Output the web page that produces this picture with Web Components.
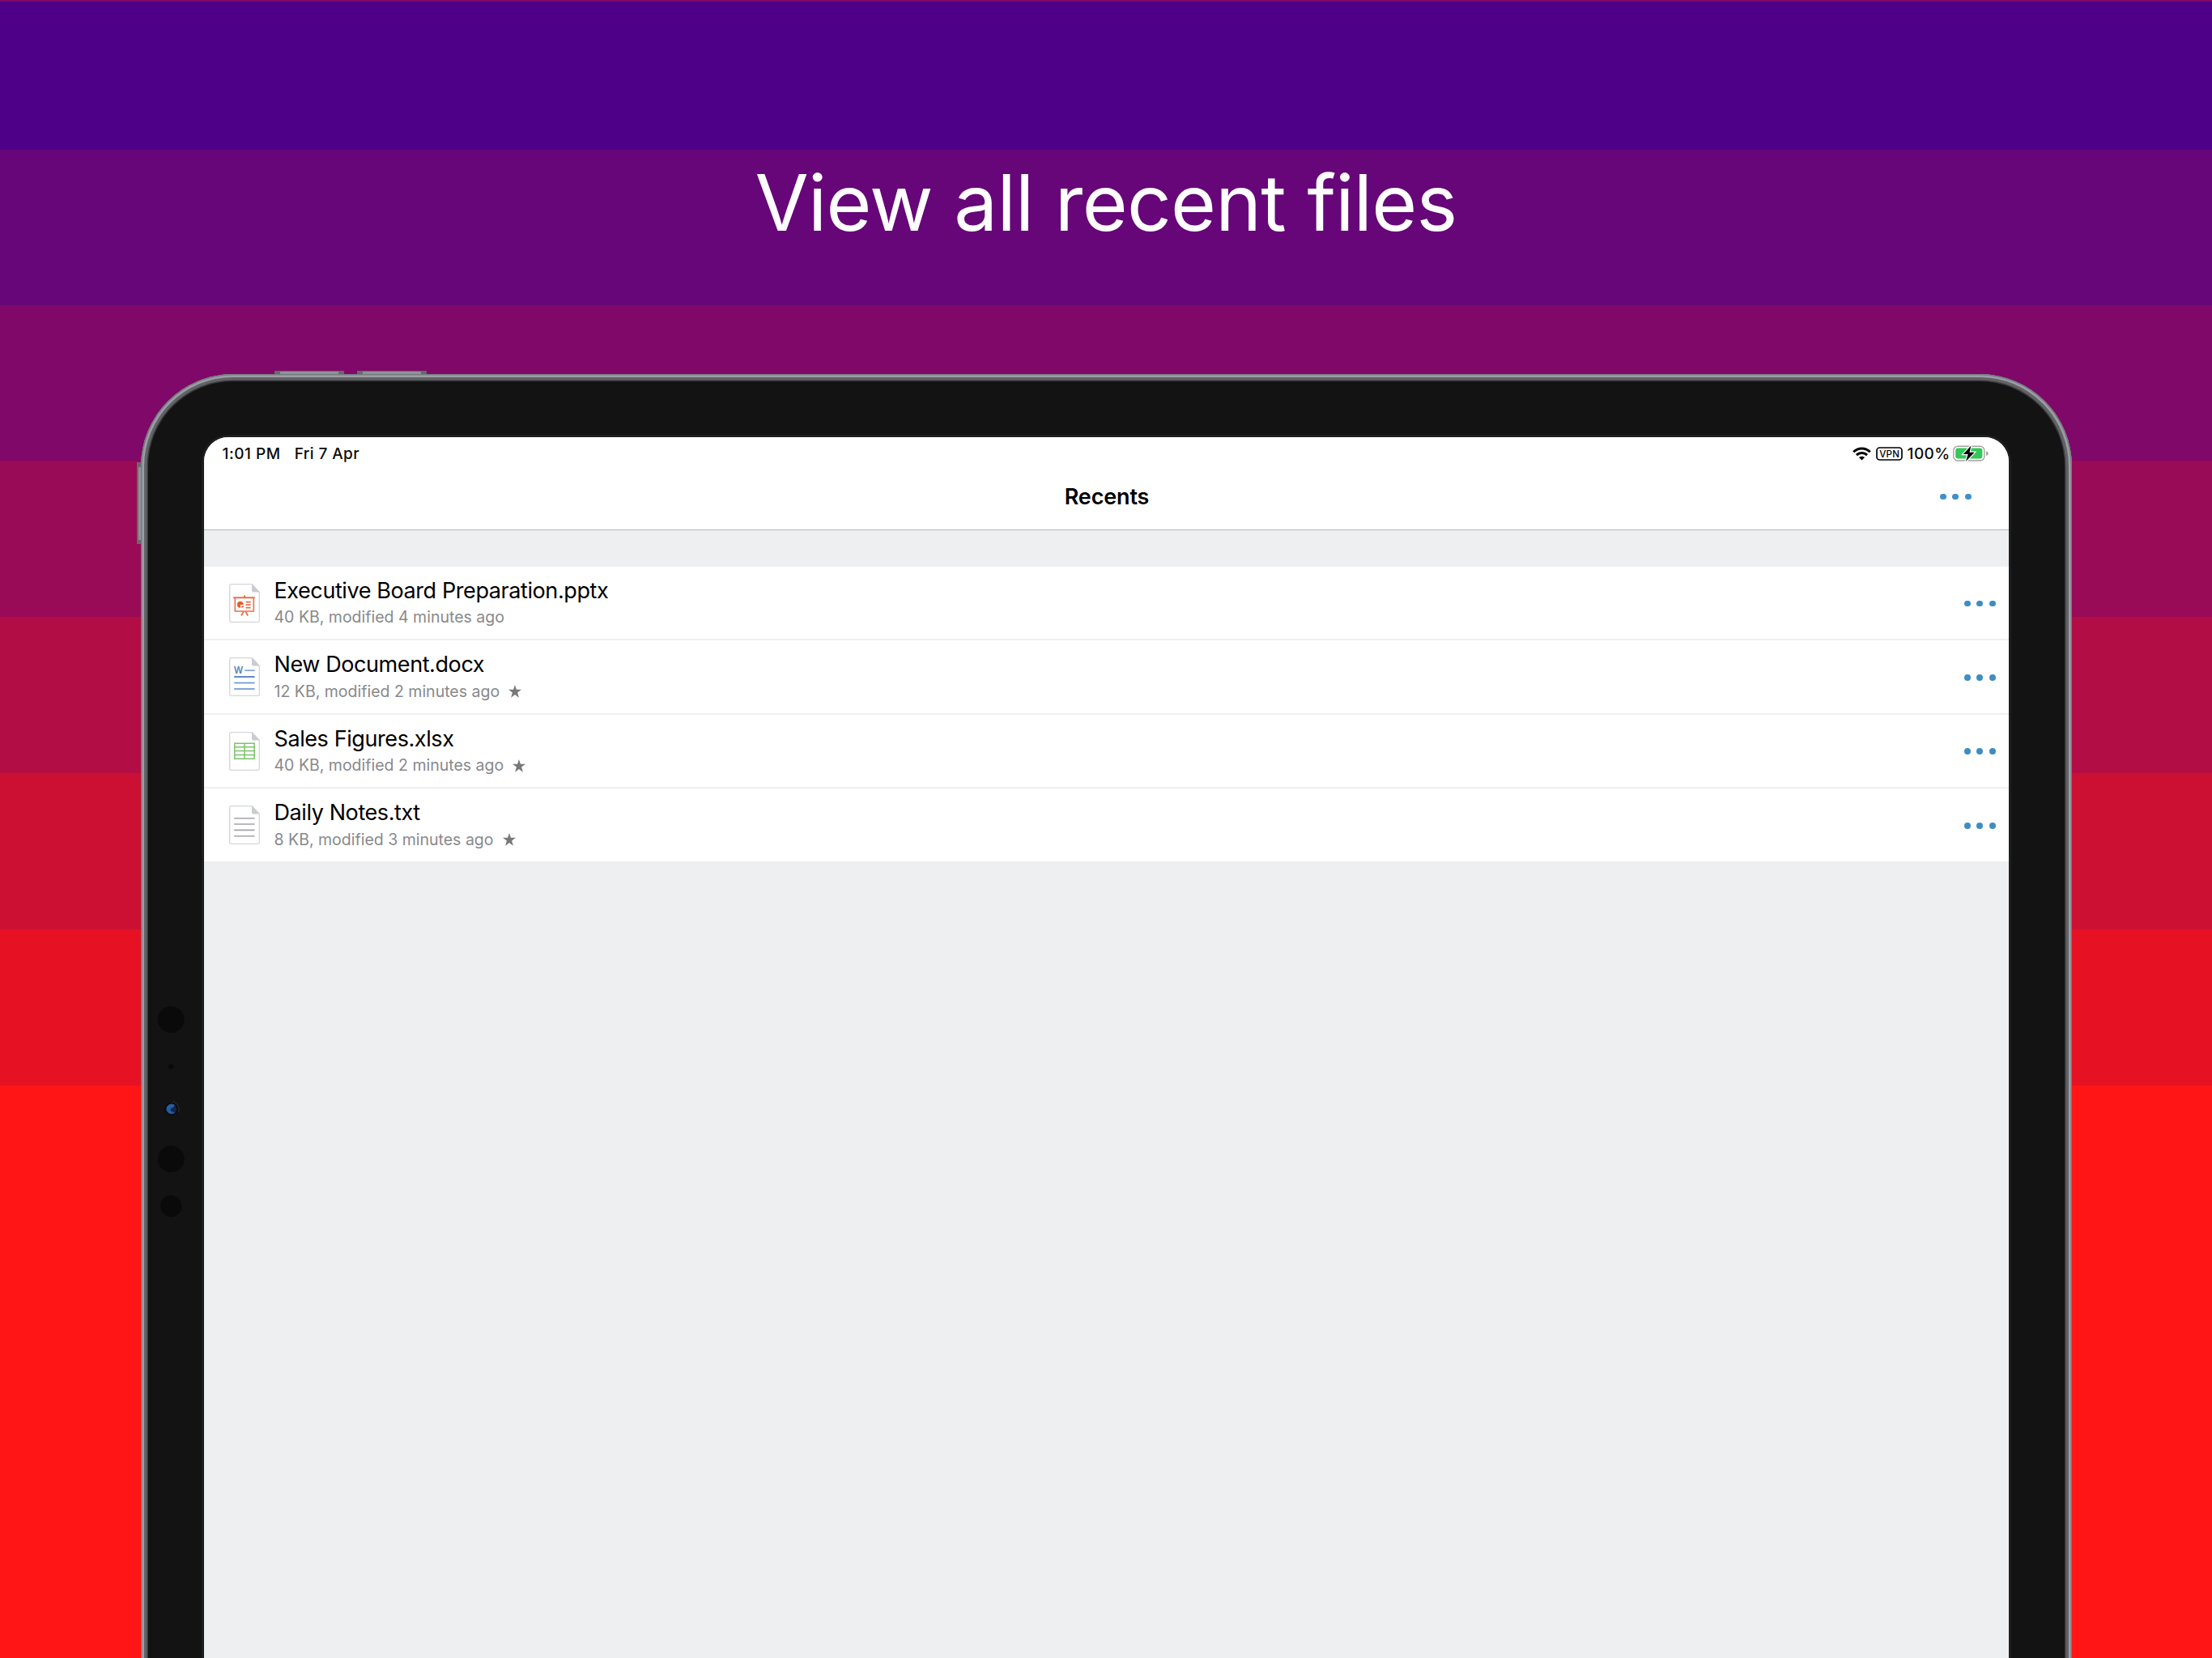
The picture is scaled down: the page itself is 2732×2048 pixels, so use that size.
<!DOCTYPE html>
<html lang="en">
<head>
<meta charset="utf-8">
<title>Recents</title>
<style>
  html, body { margin: 0; height: 100%; }
  body {
    width: 2732px;
    height: 2048px;
    overflow: hidden;
    font-family: Inter, "Liberation Sans", sans-serif;
  }
</style>
</head>
<body>

<promo-page headline="View all recent files">
  <tablet-frame>
    <status-bar time="1:01 PM" date="Fri 7 Apr" battery="100%"></status-bar>
    <nav-bar>Recents</nav-bar>
    <file-list>
      <file-row kind="pptx" name="Executive Board Preparation.pptx" info="40 KB, modified 4 minutes ago"></file-row>
      <file-row kind="docx" name="New Document.docx" info="12 KB, modified 2 minutes ago" starred></file-row>
      <file-row kind="xlsx" name="Sales Figures.xlsx" info="40 KB, modified 2 minutes ago" starred></file-row>
      <file-row kind="txt" name="Daily Notes.txt" info="8 KB, modified 3 minutes ago" starred></file-row>
    </file-list>
  </tablet-frame>
</promo-page>

<script>
class PromoPage extends HTMLElement {
  constructor() {
    super();
    this.attachShadow({ mode: "open" });
  }

  connectedCallback() {
    this.shadowRoot.innerHTML = /* html */`
      <style>
        :host {
          display: flex;
          flex-direction: column;
          align-items: center;
          box-sizing: border-box;
          width: 2732px;
          height: 2048px;
          overflow: hidden;
          background: linear-gradient(
            #800868 0 2px,
            #4e0088 2px 185px,
            #660678 185px 377px,
            #800868 377px 569px,
            #990b56 569px 762px,
            #b30d45 762px 955px,
            #cb1034 955px 1148px,
            #e61224 1148px 1341px,
            #ff1515 1341px
          );
        }

        h1 {
          margin: 0 0 190px;
          padding-top: 190px;
          height: 272px;
          box-sizing: border-box;
          flex-shrink: 0;
          font-size: 96px;
          font-weight: 400;
          line-height: 120px;
          letter-spacing: -0.7px;
          color: #fff;
          white-space: nowrap;
        }
      </style>
      <h1>${this.getAttribute("headline")}</h1>
      <slot></slot>
    `;
  }
}

class TabletFrame extends HTMLElement {
  constructor() {
    super();
    this.attachShadow({ mode: "open" });
  }

  connectedCallback() {
    this.shadowRoot.innerHTML = /* html */`
      <style>
        :host {
          display: block;
          position: relative;
          width: 2385px;
          height: 1800px;
          flex-shrink: 0;
        }

        .body {
          position: relative;
          box-sizing: border-box;
          height: 100%;
          padding: 78px 78px 0;
          border-radius: 114px 114px 0 0;
          background: #131313;
          box-shadow:
            inset 0 0 0 1.5px #777a7d,
            inset 0 0 0 4px #9c9ea7,
            inset 0 0 0 7.5px #626367,
            inset 0 0 0 9px #3a3a3c;
        }

        .screen {
          height: 100%;
          overflow: hidden;
          border-radius: 30px 30px 0 0;
          background: #eeeff1;
        }

        .ring {
          height: 100%;
          border-radius: 30px 30px 0 0;
          box-shadow: 0 0 0 3px #1c1f1e;
        }

        /* hardware buttons stick out of the body */
        .key {
          position: absolute;
          box-sizing: border-box;
          background: #8f9396;
          border: 0 solid #666a6c;
        }
        .key.top { top: -4px; width: 86px; height: 6px; border-width: 1px 7px 0; }
        .key.side { left: -5px; top: 109px; width: 7px; height: 101px; border-width: 6px 0 5px 2px; }

        .sensors { position: absolute; left: 17px; top: 770px; }
      </style>
      <div class="key top" style="left: 165px"></div>
      <div class="key top" style="left: 267px"></div>
      <div class="key side"></div>
      <div class="body">
        <div class="ring"><div class="screen"><slot></slot></div></div>
      </div>
      <svg class="sensors" width="40" height="290" viewBox="0 0 40 290">
        <g fill="#0a0a0a">
          <circle cx="20.3" cy="27.3" r="16.4"/>
          <circle cx="20.3" cy="85.5" r="3.3"/>
          <circle cx="20.3" cy="199.7" r="16.4"/>
          <circle cx="20.3" cy="257.7" r="13.2"/>
          <circle cx="20.6" cy="138" r="8"/>
        </g>
        <path d="M22 128.8a9.3 9.3 0 0 1 7 13" fill="none" stroke="#242424" stroke-width="1.6"/>
        <circle cx="20.6" cy="138" r="6.6" fill="#10264c"/>
        <path d="M14.6 136.6a6.4 6.4 0 0 1 9.6-4c.6 2.4-1.400 4-4.200 4.600-.8 1.200-.6 2.600.4 3.600 1.600 1 3.600.6 4.800 1.200a6.400 6.400 0 0 1-10.600-5.400z" fill="#265f9e"/>
      </svg>
    `;
  }
}

class StatusBar extends HTMLElement {
  constructor() {
    super();
    this.attachShadow({ mode: "open" });
  }

  connectedCallback() {
    this.shadowRoot.innerHTML = /* html */`
      <style>
        :host {
          display: flex;
          align-items: center;
          box-sizing: border-box;
          height: 40px;
          padding: 0 25px 0 23px;
          background: #fff;
          color: #0b0b0b;
          font-size: 19px;
          font-weight: 500;
          line-height: 40px;
          white-space: nowrap;
        }
        span { padding-top: 1px; }
        .time { letter-spacing: 0.55px; }
        .date { margin-left: 17px; flex: 1; letter-spacing: 0.4px; }
        .wifi { margin-right: 6px; }
        .percent { margin: 0 3px 0 6px; letter-spacing: 0.4px; }
        svg { display: block; }
      </style>
      <span class="time">${this.getAttribute("time")}</span>
      <span class="date">${this.getAttribute("date")}</span>
      <svg class="wifi" width="23" height="17" viewBox="0 0 23 17" fill="none" stroke="#000" stroke-width="3">
        <path d="M1.2 6.2a14.6 14.6 0 0 1 20.6 0"/>
        <path d="M5 10.1a9.200 9.200 0 0 1 13 0"/>
        <path d="M11.5 16.5L8 13.1a5 5 0 0 1 7 0z" fill="#000" stroke="none"/>
      </svg>
      <svg class="vpn" width="33" height="17" viewBox="0 0 33 17">
        <rect x="1" y="1" width="31" height="15" rx="3.5" fill="none" stroke="#000" stroke-width="1.7"/>
        <text x="16.7" y="12.700" text-anchor="middle" font-size="11.5" font-weight="500" letter-spacing=".3">VPN</text>
      </svg>
      <span class="percent">${this.getAttribute("battery")}</span>
      <svg width="44" height="20" viewBox="0 0 44 20">
        <rect x=".8" y="1.2" width="38" height="17.8" rx="5" fill="none" stroke="#a3a3a5" stroke-width="1.4"/>
        <path d="M41 7.2c1.8.4 2.6 1.6 2.6 2.9s-.8 2.500-2.600 2.900z" fill="#a3a3a5"/>
        <rect x="3.2" y="3.6" width="33.2" height="13" rx="3" fill="#34c759"/>
        <path d="M22.400.4L12.800 11h5.800l-2.600 8.900L26.600 8.800h-6z" fill="#000" stroke="#fff" stroke-width="2.400" paint-order="stroke"/>
      </svg>
    `;
  }
}

class MoreDots extends HTMLElement {
  constructor() {
    super();
    this.attachShadow({ mode: "open" });
  }

  connectedCallback() {
    this.shadowRoot.innerHTML = /* html */`
      <style>
        :host { display: flex; gap: 7.7px; color: #3e8dc1; }
        i { width: 7.8px; height: 7.8px; border-radius: 50%; background: currentColor; }
      </style>
      <i></i><i></i><i></i>
    `;
  }
}

class NavBar extends HTMLElement {
  constructor() {
    super();
    this.attachShadow({ mode: "open" });
  }

  connectedCallback() {
    this.shadowRoot.innerHTML = /* html */`
      <style>
        :host {
          display: grid;
          grid-template-columns: 1fr auto 1fr;
          align-items: center;
          box-sizing: border-box;
          height: 75px;
          padding: 0 46px 7px;
          background: #fff;
          border-bottom: 1px solid #b6b7ba;
          color: #000;
          font-size: 27px;
          font-weight: 600;
          line-height: 67px;
          letter-spacing: -0.15px;
        }
        .title { grid-column: 2; padding-left: 2px; }
        more-dots { justify-self: end; color: #408fcc; }
      </style>
      <span class="title"><slot></slot></span>
      <more-dots></more-dots>
    `;
  }
}

class FileList extends HTMLElement {
  constructor() {
    super();
    this.attachShadow({ mode: "open" });
  }

  connectedCallback() {
    this.shadowRoot.innerHTML = /* html */`
      <style>
        :host { display: block; padding-top: 45px; }
        ::slotted(file-row) { height: 91.4px; border-bottom: 2px solid #f0f0f2; }
        ::slotted(file-row:last-child) { height: 90.2px; border-bottom: 0; }
      </style>
      <slot></slot>
    `;
  }
}

const GLYPHS = {
  pptx: `
    <g fill="none" stroke="#e8714a" stroke-width="1.6">
      <path d="M5.2 17.2h26.6" stroke-width="1.9"/>
      <path d="M19 14.5v2.5" stroke-width="2"/>
      <path d="M7.3 17.5v16.5h23V17.5"/>
      <path d="M17.8 34.5l-2.8 5M20.4 34.5l2.8 5" stroke-width="1.8"/>
      <path d="M20.5 22.6h6.2M20.5 26.1h6.2M20.5 29.6h6.2" stroke-width="1.9"/>
    </g>
    <path d="M14 21.7a4 4 0 1 0 0 8.2V26h3.8a4 4 0 0 0-3.8-4.3z" fill="#e25f33"/>
    <path d="M15.3 27.3h3a3.4 3.4 0 0 1-3 3z" fill="#e8714a"/>`,
  docx: `
    <text x="5.8" y="20.3" font-size="12.3" font-weight="600" fill="#5283c6" textLength="11.5" lengthAdjust="spacingAndGlyphs">W</text>
    <g stroke-width="1.7">
      <path d="M19.3 16.2h12.3" stroke="#7ea3d6"/>
      <path d="M6.2 24h25.4" stroke="#4377bd"/>
      <path d="M6.2 31.5h25.4" stroke="#6c97d2"/>
      <path d="M6.2 39h25.4" stroke="#6c97d2"/>
    </g>`,
  xlsx: `
    <path d="M6.8 14.2h24.400v19H6.800zM6.800 18.800h24.400M6.800 23.600h24.400M6.800 28.400h24.400M19 14v19" fill="none" stroke="#7bc36b" stroke-width="1.5"/>`,
  txt: `
    <path d="M6.2 15.8h25.4M6.2 23h25.4M6.2 30.4h25.4M6.2 37.8h25.4" stroke="#a3a4a6" stroke-width="1.6"/>`
};

class FileRow extends HTMLElement {
  constructor() {
    super();
    this.attachShadow({ mode: "open" });
  }

  connectedCallback() {
    const star = this.hasAttribute("starred")
      ? `<svg class="star" width="16" height="16" viewBox="0 0 15 15"><path d="M7.5 0l1.8 5.500H15l-4.600 3.500 1.700 5.700-4.600-3.500-4.600 3.500L4.600 9 0 5.500h5.700z" fill="#77787a"/></svg>`
      : "";

    this.shadowRoot.innerHTML = /* html */`
      <style>
        :host {
          display: flex;
          box-sizing: border-box;
          padding: 0 16px 0 31px;
          background: #fff;
        }
        .icon { display: block; margin: 21px 18px 0 0; flex-shrink: 0; }
        .text { flex: 1; padding-top: 14px; white-space: nowrap; }
        .name {
          font-size: 27px;
          line-height: 32px;
          letter-spacing: -0.41px;
          color: #000;
        }
        .info {
          display: flex;
          align-items: center;
          gap: 11px;
          margin-top: 4.4px;
          font-size: 19.5px;
          line-height: 25px;
          color: #88898c;
        }
        more-dots { margin-top: 41.6px; }
      </style>
      <svg class="icon" width="38" height="48" viewBox="0 0 38 48">
        <path d="M28.3.7H2.5a1.8 1.8 0 0 0-1.8 1.8v43a1.8 1.8 0 0 0 1.8 1.8h33a1.8 1.8 0 0 0 1.8-1.8V10.5z" fill="#fff" stroke="#d3d6d9" stroke-width="1.3"/>
        <path d="M28 .5v8.2a1.8 1.8 0 0 0 1.8 1.8h8z" fill="#c9ccd0"/>
        ${GLYPHS[this.getAttribute("kind")]}
      </svg>
      <div class="text">
        <div class="name">${this.getAttribute("name")}</div>
        <div class="info"><span>${this.getAttribute("info")}</span>${star}</div>
      </div>
      <more-dots></more-dots>
    `;
  }
}

customElements.define("more-dots", MoreDots);
customElements.define("promo-page", PromoPage);
customElements.define("tablet-frame", TabletFrame);
customElements.define("status-bar", StatusBar);
customElements.define("nav-bar", NavBar);
customElements.define("file-list", FileList);
customElements.define("file-row", FileRow);
</script>
</body>
</html>
